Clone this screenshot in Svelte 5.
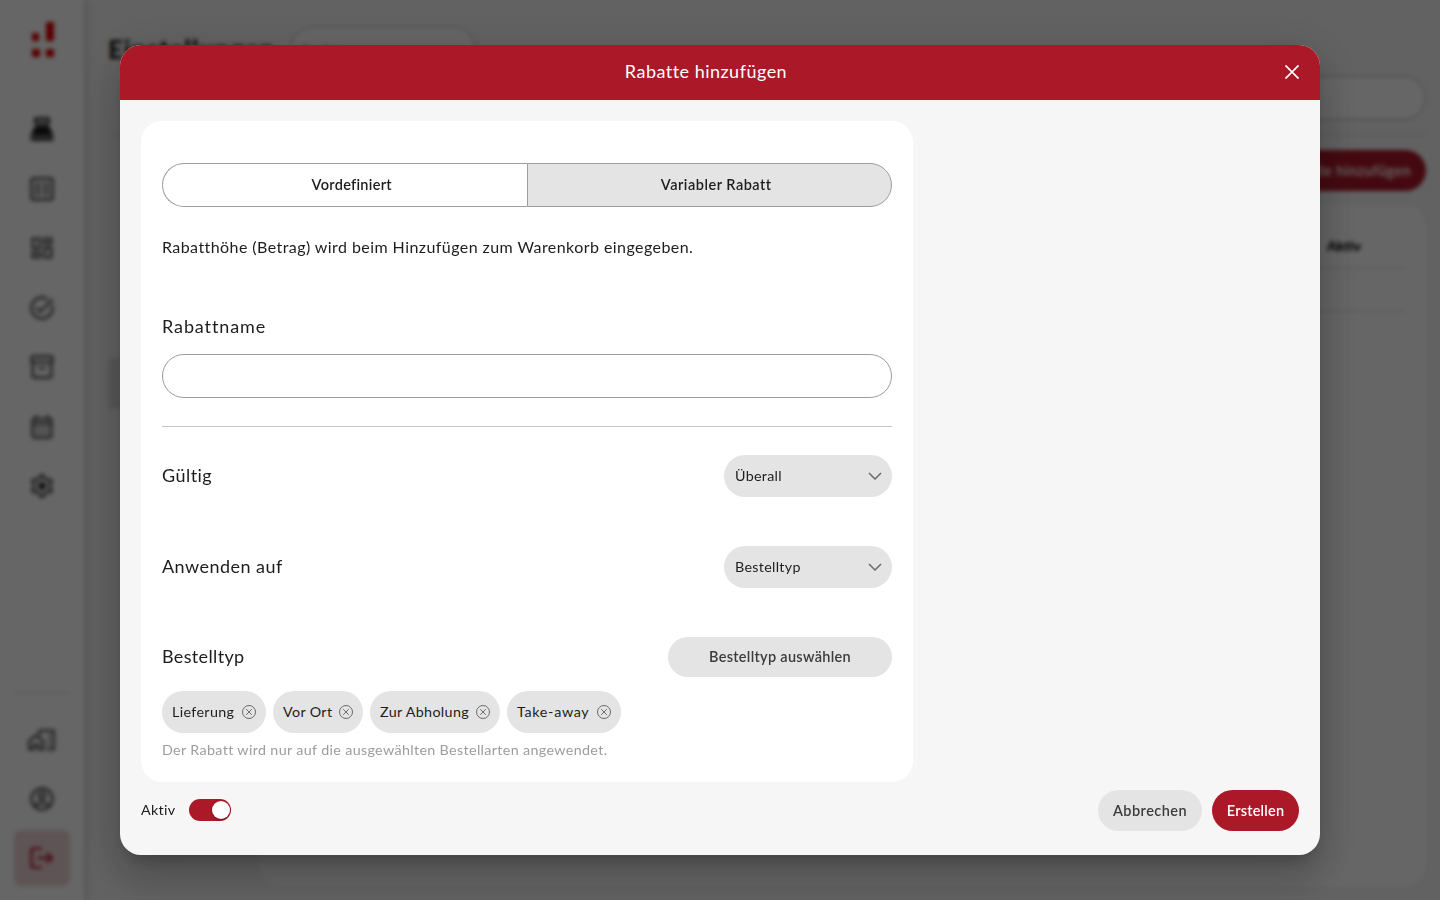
<script lang="ts">
  let discountType = $state('variable');
  let name = $state('');
  let active = $state(true);

  let orderTypes = $state([
    { label: 'Lieferung', width: 104 },
    { label: 'Vor Ort', width: 90 },
    { label: 'Zur Abholung', width: 130 },
    { label: 'Take-away', width: 114 }
  ]);

  const navIcons = [
    'M17 2H7c-1.1 0-2 .9-2 2v2c0 1.1.9 2 2 2h10c1.1 0 2-.9 2-2V4c0-1.1-.9-2-2-2zm0 4H7V4h10v2zm3 16H4c-1.1 0-2-.9-2-2v-1h20v1c0 1.1-.9 2-2 2zm-1.47-11.81C18.21 9.47 17.49 9 16.7 9H7.3c-.79 0-1.51.47-1.83 1.19L2 18h20l-3.47-7.81z',
    'M4 2h16c1.1 0 2 .9 2 2v16c0 1.100-.9 2-2 2H4c-1.100 0-2-.9-2-2V4c0-1.100.9-2 2-2zM4 4v16h16V4zM6 7h5v2H6zM13 7h5v2h-5zM6 11h5v2H6zM13 11h5v2h-5zM6 15h5v2H6zM13 15h5v2h-5z',
    'M19 5v2h-4V5h4M9 5v6H5V5h4m10 8v6h-4v-6h4M9 17v2H5v-2h4M21 3h-8v6h8V3zM11 3H3v10h8V3zm10 8h-8v10h8V11zm-10 4H3v6h8v-6z',
    'M22 5.18 10.59 16.6l-4.24-4.24 1.41-1.41 2.83 2.83 10-10L22 5.18zm-2.21 5.04c.13.57.21 1.17.21 1.78 0 4.42-3.58 8-8 8s-8-3.58-8-8 3.58-8 8-8c1.58 0 3.04.46 4.28 1.25l1.44-1.44A9.9 9.9 0 0 0 12 2C6.48 2 2 6.48 2 12s4.48 10 10 10 10-4.48 10-10c0-1.19-.22-2.33-.6-3.39l-1.61 1.61z',
    'M20 2H4c-1 0-2 .9-2 2v3.01c0 .72.43 1.34 1 1.69V20c0 1.1 1.1 2 2 2h14c.9 0 2-.9 2-2V8.7c.57-.35 1-.97 1-1.69V4c0-1.1-1-2-2-2zm-1 18H5V9h14v11zm1-13H4V4h16v3zM9 12h6v2H9z',
    'M19 4h-1V2h-2v2H8V2H6v2H5c-1.11 0-1.99.9-1.99 2L3 20a2 2 0 0 0 2 2h14c1.1 0 2-.9 2-2V6c0-1.1-.9-2-2-2zm0 16H5V10h14v10zm0-12H5V6h14v2zM9 14H7v-2h2v2zm4 0h-2v-2h2v2zm4 0h-2v-2h2v2zm-8 4H7v-2h2v2zm4 0h-2v-2h2v2zm4 0h-2v-2h2v2z',
    'M19.43 12.98c.04-.32.07-.64.07-.98s-.03-.66-.07-.98l2.11-1.65c.19-.15.24-.42.12-.64l-2-3.46a.5.5 0 0 0-.61-.22l-2.49 1c-.52-.4-1.08-.73-1.69-.98l-.38-2.65A.49.49 0 0 0 14 2h-4c-.25 0-.46.18-.49.42l-.38 2.65c-.61.25-1.17.59-1.69.98l-2.49-1a.5.5 0 0 0-.61.22l-2 3.46c-.13.22-.07.49.12.64l2.11 1.65c-.04.32-.07.65-.07.98s.03.66.07.98l-2.11 1.65c-.19.15-.24.42-.12.64l2 3.46c.12.22.39.3.61.22l2.49-1c.52.4 1.08.73 1.69.98l.38 2.65c.03.24.24.42.49.42h4c.25 0 .46-.18.49-.42l.38-2.65c.61-.25 1.17-.59 1.69-.98l2.49 1c.23.09.49 0 .61-.22l2-3.46c.12-.22.07-.49-.12-.64l-2.11-1.65zm-1.98-1.71c.04.31.05.52.05.73 0 .21-.02.43-.05.73l-.14 1.13.89.7 1.08.84-.7 1.21-1.27-.51-1.04-.42-.9.68c-.43.32-.84.56-1.25.73l-1.06.43-.16 1.13-.2 1.35h-1.4l-.19-1.35-.16-1.13-1.06-.43c-.43-.18-.83-.41-1.23-.71l-.91-.7-1.06.43-1.27.51-.7-1.21 1.08-.84.89-.7-.14-1.13c-.03-.31-.05-.54-.05-.74s.02-.43.05-.73l.14-1.13-.89-.7-1.08-.84.7-1.21 1.27.51 1.04.42.9-.68c.43-.32.84-.56 1.25-.73l1.06-.43.16-1.13.2-1.35h1.39l.19 1.35.16 1.13 1.06.43c.43.18.83.41 1.23.71l.91.7 1.06-.43 1.27-.51.7 1.21-1.07.85-.89.7.14 1.13z'
  ];

  function removeType(label: string) {
    orderTypes = orderTypes.filter((t) => t.label !== label);
  }
</script>

<div class="page" aria-hidden="true">
  <nav class="sidebar">
    <svg class="logo" viewBox="0 0 24 36" width="24" height="36">
      <path fill="#e00000" d="M1 11h7v8H1zM15 0h8v19h-8zM1 27h8v8H1zM15 27h8v8h-8z" />
    </svg>
    <div class="nav-list">
      {#each navIcons as icon, i}
        <svg viewBox="0 0 24 24" width="28" height="28">
          <path fill-rule="evenodd" d={icon} />
          {#if i === navIcons.length - 1}
            <circle class="gear-dot" cx="12" cy="12" r="3.2" />
          {/if}
        </svg>
      {/each}
    </div>
    <div class="nav-bottom">
      <svg viewBox="0 0 24 24" width="28" height="28" fill="none">
        <path class="line" d="M1 20v-7l6-5 6 5v7H9v-4H5v4zM10 8V4h12v16h-6M17 8h2M17 12h2M17 16h2" />
      </svg>
      <svg viewBox="0 0 24 24" width="28" height="28" fill="none">
        <g class="line">
          <circle cx="12" cy="12" r="9" />
          <circle cx="12" cy="9.5" r="2.7" />
          <path d="M5.5 18c3.5-3.5 9.5-3.5 13 0" />
        </g>
      </svg>
      <div class="logout">
        <svg viewBox="0 0 24 24" width="28" height="28">
          <path class="out" d="m17 7-1.4 1.4L18.2 11H8v2h10.200l-2.600 2.600L17 17l5-5zM4 5h8V3H4a2 2 0 0 0-2 2v14c0 1.100.9 2 2 2h8v-2H4z" />
        </svg>
      </div>
    </div>
  </nav>
  <main class="content">
    <header class="top">
      <h1>Einstellungen</h1>
      <div class="search">Suchen...</div>
    </header>
    <div class="filter"></div>
    <div class="rule"></div>
    <div class="add">Rabatte hinzufügen</div>
    <div class="columns">
      <div class="submenu"><div class="current"></div></div>
      <div class="table">
        <div class="thead">Aktiv</div>
        <div class="trow"></div>
      </div>
    </div>
  </main>
</div>

<div class="overlay">
  <div class="dialog" role="dialog" aria-label="Rabatte hinzufügen">
    <header class="dialog-header">
      <h2>Rabatte hinzufügen</h2>
      <button class="close" aria-label="Schließen">
        <svg viewBox="0 0 14 14" width="14" height="14"><path d="M.5.5l13 13M13.5.5l-13 13" /></svg>
      </button>
    </header>

    <div class="body">
      <section class="card">
        <div class="segmented">
          <button class:selected={discountType === 'fixed'} onclick={() => (discountType = 'fixed')}>Vordefiniert</button>
          <button class="wide" class:selected={discountType === 'variable'} onclick={() => (discountType = 'variable')}>Variabler Rabatt</button>
        </div>
        <p class="info">Rabatthöhe (Betrag) wird beim Hinzufügen zum Warenkorb eingegeben.</p>

        <label class="title name-label" for="name">Rabattname</label>
        <input id="name" type="text" bind:value={name} />
        <hr />

        <div class="row">
          <span class="title">Gültig</span>
          <button class="select">
            Überall
            <svg viewBox="0 0 14 8" width="14" height="8"><path d="M1 1l6 6 6-6" /></svg>
          </button>
        </div>
        <div class="row">
          <span class="title">Anwenden auf</span>
          <button class="select">
            Bestelltyp
            <svg viewBox="0 0 14 8" width="14" height="8"><path d="M1 1l6 6 6-6" /></svg>
          </button>
        </div>
        <div class="row types">
          <span class="title">Bestelltyp</span>
          <button class="choose">Bestelltyp auswählen</button>
        </div>

        <div class="chips">
          {#each orderTypes as type}
            <div class="chip" style="width: {type.width}px">
              <span>{type.label}</span>
              <button aria-label="Entfernen" onclick={() => removeType(type.label)}>
                <svg viewBox="0 0 14 14" width="14" height="14">
                  <circle cx="7" cy="7" r="6.5" />
                  <path d="M4.2 4.2l5.6 5.6M9.8 4.2l-5.6 5.6" />
                </svg>
              </button>
            </div>
          {/each}
        </div>
        <p class="hint">Der Rabatt wird nur auf die ausgewählten Bestellarten angewendet.</p>
      </section>
    </div>

    <footer class="dialog-footer">
      <span class="active-label">Aktiv</span>
      <button class="switch" class:on={active} aria-label="Aktiv" onclick={() => (active = !active)}>
        <span class="knob"></span>
      </button>
      <button class="btn cancel">Abbrechen</button>
      <button class="btn create">Erstellen</button>
    </footer>
  </div>
</div>

<style>
  :global(body) {
    background: #f5f5f5;
    overflow: hidden;
  }

  .page,
  .overlay,
  button,
  input {
    font-family: Lato, 'Liberation Sans', sans-serif;
    box-sizing: border-box;
  }

  button {
    border: 0;
    padding: 0;
    color: inherit;
    cursor: pointer;
  }

  h1,
  h2,
  p {
    margin: 0;
  }

  /* page behind the dialog */
  .page {
    display: flex;
    height: 900px;
    background: #f5f5f5;
  }

  .sidebar {
    width: 84px;
    flex: none;
    box-sizing: border-box;
    padding: 22px 14px 14px;
    background: #fff;
    box-shadow: 0 0 10px rgba(0, 0, 0, 0.25);
    display: flex;
    flex-direction: column;
    align-items: center;
  }

  .logo {
    margin-left: 2px;
  }

  .nav-list {
    margin-top: 57px;
    display: flex;
    flex-direction: column;
    gap: 31.5px;
    fill: #454545;
  }

  .nav-list svg:first-child,
  .gear-dot {
    fill: #1a1a1a;
  }

  .nav-bottom {
    width: 100%;
    margin-top: auto;
    padding-top: 32px;
    border-top: 1px solid #d5d5d5;
    display: flex;
    flex-direction: column;
    align-items: center;
    gap: 31px;
  }

  .line {
    stroke: #454545;
    stroke-width: 2;
  }

  .logout {
    width: 56px;
    height: 56px;
    margin-top: -14px;
    border-radius: 7px;
    background: #eed1d4;
    display: grid;
    place-items: center;
  }

  .out {
    fill: #ab1828;
  }

  .content {
    flex: 1;
    padding: 27px 14px 14px 24px;
    display: flex;
    flex-direction: column;
  }

  .top {
    display: flex;
    gap: 15px;
    height: 49px;
  }

  h1 {
    width: 167px;
    font-size: 26px;
    line-height: 45px;
    font-weight: 900;
    letter-spacing: 0.8px;
    color: #1d1d1b;
  }

  .search,
  .filter {
    height: 44px;
    box-sizing: border-box;
    border: 1px solid #ababab;
    border-radius: 22px;
    background: #fff;
  }

  .search {
    width: 186px;
    padding-left: 11px;
    font-size: 14px;
    line-height: 42px;
    color: #888;
  }

  .filter {
    margin-left: 152px;
  }

  .rule {
    margin-top: 14px;
    height: 1px;
    background: #d0d0d0;
  }

  .add {
    align-self: flex-end;
    margin-top: 15px;
    padding: 0 15px;
    height: 41px;
    line-height: 41px;
    border-radius: 21px;
    background: #ab1828;
    color: #fff;
    font-size: 14.5px;
    font-weight: 600;
    letter-spacing: 0.35px;
  }

  .columns {
    flex: 1;
    margin-top: 14px;
    display: flex;
    gap: 14px;
  }

  .submenu {
    width: 137px;
    padding-top: 153px;
  }

  .current {
    height: 51px;
    background: #ddd;
  }

  .table {
    flex: 1;
    padding: 21px;
    border-radius: 21px;
    background: #fff;
  }

  .thead,
  .trow {
    height: 42px;
    border-bottom: 1px solid #d0d0d0;
  }

  .thead {
    padding-right: 44px;
    text-align: right;
    font-size: 14px;
    line-height: 40px;
    font-weight: 900;
  }

  .overlay {
    position: fixed;
    inset: 0;
    display: grid;
    place-items: center;
    background: rgba(0, 0, 0, 0.6);
    backdrop-filter: blur(2px);
    color: #1d1d1b;
  }

  /* dialog */
  .dialog {
    width: 1200px;
    height: 810px;
    border-radius: 21px;
    overflow: hidden;
    background: #f6f6f6;
    display: flex;
    flex-direction: column;
    box-shadow:
      0 11px 15px -7px rgba(0, 0, 0, 0.2),
      0 24px 38px 3px rgba(0, 0, 0, 0.14),
      0 9px 46px 8px rgba(0, 0, 0, 0.12);
  }

  .dialog-header {
    height: 55px;
    box-sizing: border-box;
    flex: none;
    padding: 0 21px 2px 0;
    display: flex;
    align-items: center;
    background: #ab1828;
    color: #fff;
  }

  h2 {
    flex: 1;
    padding: 0 0 2px 7px;
    text-align: center;
    font-size: 18px;
    font-weight: 400;
    letter-spacing: 0.48px;
  }

  .close {
    display: flex;
    background: none;
  }

  .close path {
    stroke: #fff;
    stroke-width: 1.7;
  }

  .body {
    padding: 21px 21px 0;
  }

  .card {
    width: 772px;
    height: 661px;
    box-sizing: border-box;
    padding: 42px 21px 0;
    border-radius: 21px;
    background: #fff;
  }

  .segmented {
    display: flex;
    height: 44px;
  }

  .segmented button {
    flex: 1;
    padding: 0 0 2px 14px;
    border: 1px solid #9d9d9c;
    border-radius: 22px 0 0 22px;
    background: #fff;
    font-size: 14.5px;
    font-weight: 600;
    letter-spacing: 0.3px;
  }

  .segmented button:first-child {
    border-right: 0;
  }

  .segmented .wide {
    border-radius: 0 22px 22px 0;
    letter-spacing: 0.5px;
  }

  .segmented .selected {
    background: #e4e4e4;
  }

  .info {
    margin-top: 28px;
    font-size: 16px;
    line-height: 24px;
    letter-spacing: 0.43px;
  }

  .title {
    padding-bottom: 3px;
    font-size: 18px;
    line-height: 26px;
    letter-spacing: 0.45px;
  }

  .name-label {
    display: block;
    margin-top: 54px;
    padding: 0;
    letter-spacing: 0.9px;
  }

  input {
    display: block;
    width: 100%;
    height: 44px;
    margin-top: 15px;
    padding: 0 14px;
    border: 1px solid #9d9d9c;
    border-radius: 22px;
    background: #fff;
    font-size: 14px;
    outline: none;
  }

  hr {
    margin: 28px 0;
    border: 0;
    height: 1px;
    background: #c6c6c6;
  }

  .row {
    height: 42px;
    margin-bottom: 49px;
    display: flex;
    align-items: center;
    justify-content: space-between;
  }

  .row.types {
    height: 40px;
    margin-bottom: 14px;
  }

  .types .title {
    padding-bottom: 2px;
    letter-spacing: 0.35px;
  }

  .select {
    width: 168px;
    height: 42px;
    padding: 0 10px 2px 11px;
    border-radius: 21px;
    background: #e4e4e4;
    display: flex;
    align-items: center;
    justify-content: space-between;
    font-size: 14.3px;
    letter-spacing: 0.3px;
  }

  .select svg {
    margin-top: 2px;
  }

  .select path {
    fill: none;
    stroke: #6a6a6a;
    stroke-width: 1.5;
  }

  .choose {
    width: 224px;
    height: 40px;
    padding-bottom: 2px;
    border-radius: 20px;
    background: #e4e4e4;
    color: #3c3c3b;
    font-size: 14.5px;
    font-weight: 600;
    letter-spacing: 0.3px;
  }

  .chips {
    display: flex;
    gap: 7px;
  }

  .chip {
    height: 42px;
    box-sizing: border-box;
    padding: 0 10px;
    border-radius: 21px;
    background: #e4e4e4;
    display: flex;
    align-items: center;
    justify-content: space-between;
    font-size: 14.3px;
    letter-spacing: 0.35px;
    white-space: nowrap;
  }

  .chip span {
    padding-bottom: 1px;
  }

  .chip:last-child {
    letter-spacing: 0.7px;
  }

  .chip button {
    display: flex;
    background: none;
  }

  .chip circle,
  .chip path {
    fill: none;
    stroke: #6a6a6a;
  }

  .hint {
    margin-top: 6px;
    font-size: 14.3px;
    line-height: 21px;
    letter-spacing: 0.35px;
    color: #9d9d9c;
  }

  .dialog-footer {
    padding: 8px 21px 0;
    display: flex;
    align-items: center;
  }

  .active-label {
    width: 48px;
    padding-bottom: 2px;
    font-size: 14.3px;
    letter-spacing: 0.3px;
  }

  .switch {
    width: 42px;
    height: 22px;
    margin-bottom: 1px;
    padding: 2px 1.5px;
    border-radius: 11px;
    background: #9d9d9c;
    display: flex;
  }

  .switch.on {
    background: #ab1828;
    justify-content: flex-end;
  }

  .knob {
    width: 18px;
    height: 18px;
    border-radius: 50%;
    background: #fff;
    box-shadow: 0 1px 2px rgba(0, 0, 0, 0.35);
  }

  .btn {
    height: 41px;
    padding-bottom: 1px;
    border-radius: 21px;
    font-size: 14.5px;
    font-weight: 600;
    letter-spacing: 0.2px;
  }

  .cancel {
    width: 104px;
    margin-left: auto;
    margin-right: 10px;
    background: #e4e4e4;
    color: #3c3c3b;
    letter-spacing: 0.45px;
  }

  .create {
    width: 87px;
    background: #ab1828;
    color: #fff;
  }
</style>
